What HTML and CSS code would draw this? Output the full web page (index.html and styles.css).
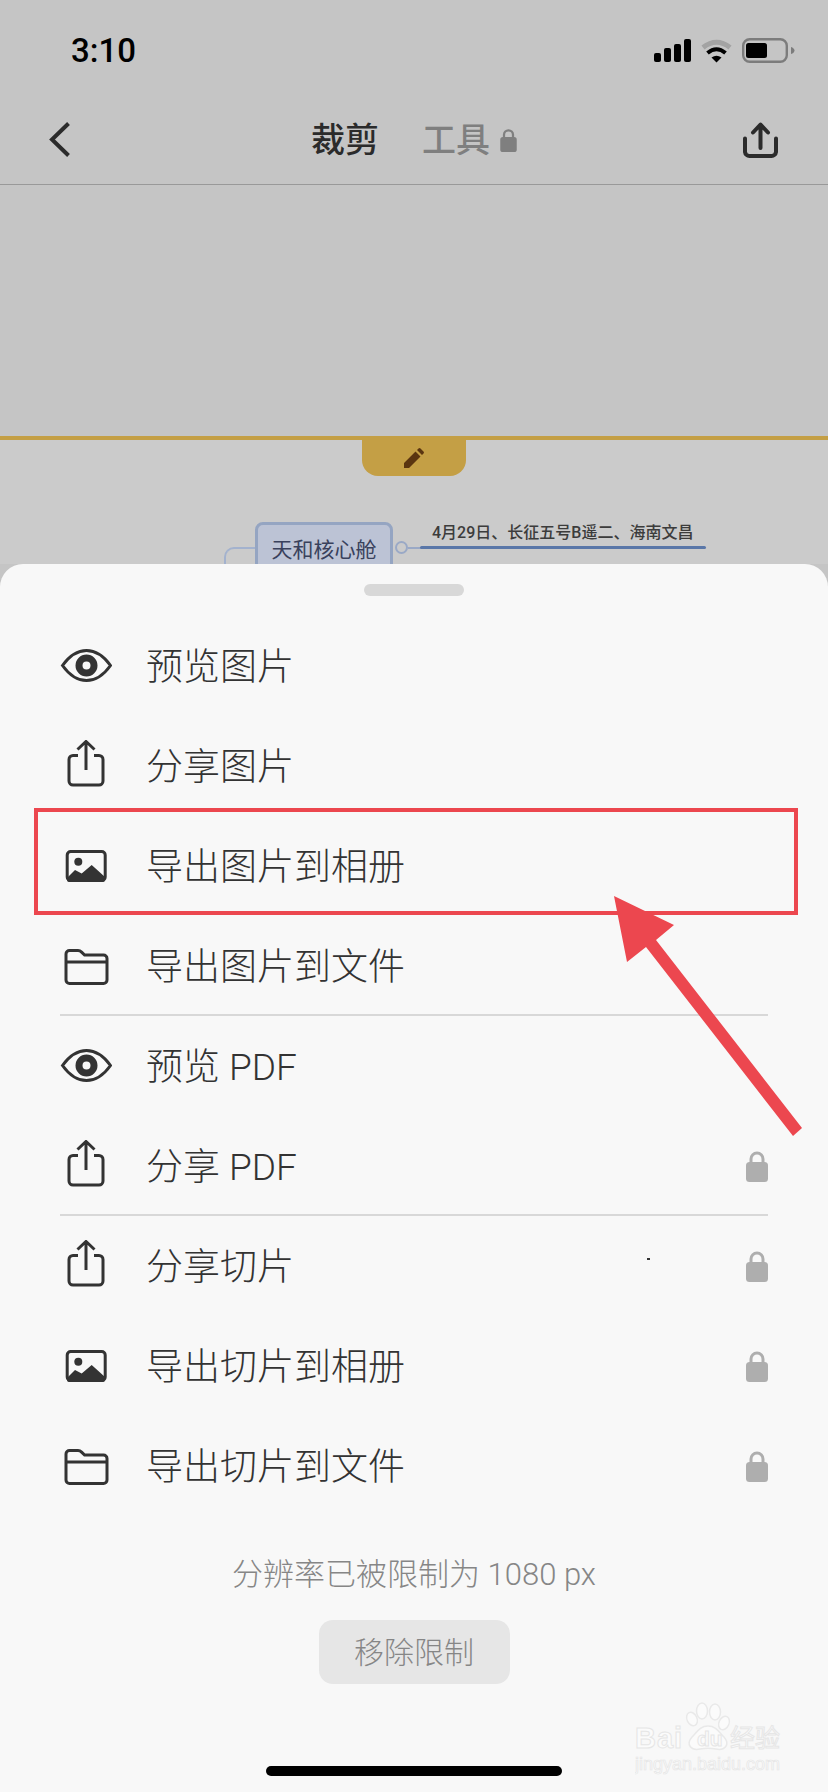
FILE: index.html
```html
<!DOCTYPE html>
<html lang="zh-CN">
<head>
    <meta charset="UTF-8">
    <meta name="viewport" content="width=device-width, initial-scale=1.0">
    <title>裁剪</title>
    <link rel="stylesheet" href="styles.css">
</head>
<body>
    <svg class="icon-defs" width="0" height="0">
        <symbol id="i-eye" viewBox="0 0 52 52">
            <path d="M2.500 25.500C10 15 18 10.500 26.500 10.500S43 15 50.500 25.500C43 36 35 40.500 26.500 40.500S10 36 2.500 25.500Z" fill="none" stroke="currentColor" stroke-width="3"/>
            <circle cx="26.500" cy="25.500" r="7.500" fill="none" stroke="currentColor" stroke-width="7"/>
        </symbol>
        <symbol id="i-share" viewBox="0 0 52 52">
            <path d="M18 15.500H13a4 4 0 0 0-4 4V41a4 4 0 0 0 4 4h26a4 4 0 0 0 4-4V19.500a4 4 0 0 0-4-4h-5" fill="none" stroke="currentColor" stroke-width="3"/>
            <path d="M26 30V2M17.500 9.500L26 1.500l8.500 8" fill="none" stroke="currentColor" stroke-width="3"/>
        </symbol>
        <symbol id="i-image" viewBox="0 0 52 52">
            <rect x="7.200" y="11.500" width="38" height="29" rx="3.500" fill="none" stroke="currentColor" stroke-width="3"/>
            <circle cx="18.300" cy="21.700" r="4" fill="currentColor"/>
            <path d="M7 38L15 30l6.700 3.500 10-8.500L45 37v3a2 2 0 0 1-2 2H9a2 2 0 0 1-2-2Z" fill="currentColor"/>
        </symbol>
        <symbol id="i-folder" viewBox="0 0 52 52">
            <path d="M6 14a3.500 3.500 0 0 1 3.500-3.500h8.500c1.600 0 2.600.6 3.600 1.600l3 3h18.900a3.500 3.500 0 0 1 3.500 3.500V40a3.500 3.500 0 0 1-3.500 3.500H9.500A3.500 3.500 0 0 1 6 40Z" fill="none" stroke="currentColor" stroke-width="3"/>
            <path d="M6 22H46" fill="none" stroke="currentColor" stroke-width="3"/>
        </symbol>
        <symbol id="i-lock" viewBox="0 0 22 32">
            <path d="M5 14V9a6 6 0 0 1 12 0v5" fill="none" stroke="currentColor" stroke-width="3"/>
            <rect x="0" y="12" width="22" height="20" rx="3.500" fill="currentColor"/>
        </symbol>
    </svg>

    <div class="app">
        <!-- Status bar -->
        <div class="status">
            <span class="time">3:10</span>
            <div class="status-icons">
                <svg width="37" height="23" viewBox="0 0 37 23">
                    <rect x="0" y="14" width="7" height="9" rx="2"/>
                    <rect x="10" y="9" width="7" height="14" rx="2"/>
                    <rect x="20" y="5" width="7" height="18" rx="2"/>
                    <rect x="30" y="0" width="7" height="23" rx="2"/>
                </svg>
                <svg width="31" height="25" viewBox="0 0 31 25">
                    <path d="M2 9.500Q15.500-1 29 9.500" fill="none" stroke="#a3a3a3" stroke-width="5"/>
                    <path d="M6.500 15Q15.500 7.500 24.500 15" fill="none" stroke="#000" stroke-width="4"/>
                    <path d="M10.500 19.500L15.500 24.500 20.500 19.500Q15.500 16 10.500 19.500Z"/>
                </svg>
                <svg width="53" height="25" viewBox="0 0 53 25">
                    <rect x="1.200" y="1.200" width="43.600" height="22.600" rx="6.500" fill="none" stroke="#7c7c7c" stroke-width="2.400"/>
                    <rect x="4" y="5" width="21" height="15" rx="2.500"/>
                    <path d="M49 9c2 .5 3.500 2 3.500 3.500S51 15.500 49 16Z" fill="#7c7c7c"/>
                </svg>
            </div>
        </div>

        <!-- Navigation -->
        <div class="nav">
            <svg class="nav-back" width="21" height="35" viewBox="0 0 21 35">
                <path d="M19.500 1.500L3 17.500 19.500 33.500" fill="none" stroke="currentColor" stroke-width="4"/>
            </svg>
            <div class="nav-tabs">
                <span class="tab-active">裁剪</span>
                <span class="tab-locked">工具<svg width="17" height="24"><use href="#i-lock"/></svg></span>
            </div>
            <svg class="nav-share" width="36" height="36" viewBox="0 0 36 36">
                <path d="M2 16.500V30a4.500 4.500 0 0 0 4.500 4H28.500a4.500 4.500 0 0 0 4.500-4V16.500" fill="none" stroke="currentColor" stroke-width="4" stroke-linecap="round"/>
                <path d="M17.500 26V3M10 10.500L17.500 2.500 25 10.500" fill="none" stroke="currentColor" stroke-width="4" stroke-linecap="round" stroke-linejoin="round"/>
            </svg>
        </div>

        <div class="crop-area"></div>

        <!-- Mind map under the crop line -->
        <div class="canvas">
            <div class="crop-handle">
                <svg width="20" height="20" viewBox="0 0 20 20">
                    <path d="M0 20V15L11.500 3.500l5 5L5 20ZM13 2l1.500-1.500a1.500 1.500 0 0 1 2 0l3 3a1.500 1.500 0 0 1 0 2L18 7Z"/>
                </svg>
            </div>
            <div class="map-branch"></div>
            <div class="map-node">天和核心舱</div>
            <div class="map-toggle"></div>
            <div class="map-stub"></div>
            <div class="map-label">4月29日、长征五号B遥二、海南文昌</div>
            <div class="map-line"></div>
        </div>

        <!-- Export sheet -->
        <div class="sheet">
            <div class="grabber"></div>
            <div class="list">
                <div class="group">
                    <div class="row"><svg class="row-icon"><use href="#i-eye"/></svg><span class="row-label">预览图片</span></div>
                    <div class="row"><svg class="row-icon"><use href="#i-share"/></svg><span class="row-label">分享图片</span></div>
                    <div class="row"><svg class="row-icon"><use href="#i-image"/></svg><span class="row-label">导出图片到相册</span></div>
                    <div class="row"><svg class="row-icon"><use href="#i-folder"/></svg><span class="row-label">导出图片到文件</span></div>
                </div>
                <div class="group">
                    <div class="row"><svg class="row-icon"><use href="#i-eye"/></svg><span class="row-label">预览 PDF</span></div>
                    <div class="row"><svg class="row-icon"><use href="#i-share"/></svg><span class="row-label">分享 PDF</span><svg class="row-lock"><use href="#i-lock"/></svg></div>
                </div>
                <div class="group">
                    <div class="row"><svg class="row-icon"><use href="#i-share"/></svg><span class="row-label">分享切片</span><svg class="row-lock"><use href="#i-lock"/></svg></div>
                    <div class="row"><svg class="row-icon"><use href="#i-image"/></svg><span class="row-label">导出切片到相册</span><svg class="row-lock"><use href="#i-lock"/></svg></div>
                    <div class="row"><svg class="row-icon"><use href="#i-folder"/></svg><span class="row-label">导出切片到文件</span><svg class="row-lock"><use href="#i-lock"/></svg></div>
                </div>
            </div>
            <p class="limit-note">分辨率已被限制为 1080 px</p>
            <div class="limit-btn"><span>移除限制</span></div>
            <div class="home-bar"></div>
            <span class="speck"></span>
        </div>

        <!-- Annotations on top of the screenshot -->
        <div class="mark-box"></div>
        <svg class="mark-arrow" width="195" height="250" viewBox="610 890 195 250">
            <path d="M614 896L674 925 656 940 802 1128 793 1136 646 947 627 962Z"/>
        </svg>

        <svg class="watermark" width="150" height="76" viewBox="635 1702 150 76">
            <g class="wm-shape">
                <ellipse cx="692" cy="1719" rx="5" ry="7" transform="rotate(-25 692 1719)"/>
                <ellipse cx="702" cy="1711" rx="5.500" ry="8"/>
                <ellipse cx="715" cy="1712" rx="5.500" ry="8"/>
                <ellipse cx="724" cy="1723" rx="5" ry="7" transform="rotate(25 724 1723)"/>
                <path d="M708 1726C716 1726 719 1732 724 1737C731 1745 724 1751 716 1749C711 1748 705 1748 700 1749C692 1751 685 1745 692 1737C697 1732 700 1726 708 1726Z"/>
            </g>
            <text class="wm-text wm-bai" x="635" y="1748">Bai</text>
            <text class="wm-text wm-du" x="697" y="1746">du</text>
            <text class="wm-text wm-cn" x="730" y="1747">经验</text>
            <text class="wm-text wm-url" x="635" y="1770">jingyan.baidu.com</text>
        </svg>
    </div>
</body>
</html>
```

FILE: styles.css
```css
* {
    margin: 0;
    padding: 0;
    box-sizing: border-box;
}
body {
    background: #c5c5c5;
    font-family: Roboto, "Noto Sans CJK SC", sans-serif;
}
.icon-defs {
    position: absolute;
}
.app {
    position: relative;
    width: 828px;
    height: 1792px;
    overflow: hidden;
    display: flex;
    flex-direction: column;
    background: #c5c5c5;
}

/* status bar */
.status {
    height: 100px;
    flex: none;
    display: flex;
    align-items: center;
    justify-content: space-between;
    padding: 0 33px 0 71px;
}
.time {
    font-size: 33px;
    font-weight: 500;
    color: #000;
}
.status-icons {
    display: flex;
    align-items: center;
    gap: 10px;
}

/* nav */
.nav {
    height: 85px;
    flex: none;
    display: grid;
    grid-template-columns: 1fr auto 1fr;
    align-items: center;
    padding: 0 49px 6px 49px;
    border-bottom: 1px solid #999;
    color: #2b2b2b;
}
.nav-back {
    margin-top: 1px;
}
.nav-share {
    justify-self: end;
    margin-top: 2px;
}
.nav-tabs {
    display: flex;
    align-items: center;
    gap: 43px;
    margin-top: 2px;
    font-size: 34px;
    line-height: 44px;
}
.tab-active {
    font-weight: 500;
}
.tab-locked {
    display: flex;
    align-items: center;
    gap: 10px;
    font-weight: 500;
    color: #7f7f7f;
}

.crop-area {
    height: 251px;
    flex: none;
}

/* canvas */
.canvas {
    position: relative;
    height: 128px;
    flex: none;
    overflow: hidden;
    background: #cbcbcb;
    border-top: 4px solid #c49f45;
}
.crop-handle {
    width: 104px;
    height: 36px;
    margin: 0 auto;
    display: flex;
    align-items: center;
    justify-content: center;
    background: #c49f45;
    border-radius: 0 0 16px 16px;
    fill: #5a3510;
}
.map-branch {
    position: absolute;
    left: 224px;
    top: 107px;
    width: 32px;
    height: 30px;
    border-left: 2px solid #a3b2ce;
    border-top: 2px solid #a3b2ce;
    border-radius: 10px 0 0 0;
}
.map-node {
    position: absolute;
    left: 255px;
    top: 82px;
    width: 138px;
    height: 52px;
    display: flex;
    align-items: center;
    justify-content: center;
    background: #bcc3d5;
    border: 3px solid #95a5c2;
    border-radius: 8px;
    font-size: 21px;
    color: #39415c;
}
.map-toggle {
    position: absolute;
    left: 395px;
    top: 101px;
    width: 13px;
    height: 13px;
    border: 2px solid #9aa9c6;
    border-radius: 50%;
}
.map-stub {
    position: absolute;
    left: 408px;
    top: 107px;
    width: 13px;
    height: 2px;
    background: #9aa9c6;
}
.map-label {
    position: absolute;
    left: 432px;
    top: 81px;
    font-size: 16px;
    line-height: 24px;
    font-weight: 500;
    color: #3c3c3c;
    white-space: nowrap;
}
.map-line {
    position: absolute;
    left: 420px;
    top: 106px;
    width: 286px;
    height: 3px;
    background: #5a77a8;
    border-radius: 2px;
}

/* sheet */
.sheet {
    position: relative;
    flex: 1;
    display: flex;
    flex-direction: column;
    align-items: center;
    background: #f8f8f8;
    border-radius: 23px 23px 0 0;
}
.grabber {
    width: 100px;
    height: 12px;
    margin-top: 20px;
    background: #d8d8d8;
    border-radius: 6px;
}
.list {
    width: 100%;
    margin-top: 20px;
    padding: 0 60px;
}
.group + .group {
    box-shadow: 0 -2px 0 #d8d8d8;
}
.row {
    height: 100px;
    display: flex;
    align-items: center;
    color: #333;
    font-size: 37px;
}
.row-icon {
    width: 52px;
    height: 52px;
    margin-right: 34px;
    flex: none;
    overflow: visible;
}
.row-label {
    flex: 1;
    margin-bottom: 4px;
    font-weight: 300;
}
.row-lock {
    width: 22px;
    height: 32px;
    flex: none;
    color: #aeaeae;
}
.tab-locked svg {
    color: #7f7f7f;
}
.limit-note {
    margin-top: 39px;
    font-size: 31px;
    line-height: 40px;
    font-weight: 300;
    color: #868686;
}
.limit-btn {
    width: 191px;
    height: 64px;
    margin-top: 25px;
    display: flex;
    align-items: center;
    justify-content: center;
    background: #e6e6e6;
    border-radius: 14px;
    font-size: 30px;
    color: #868686;
}
.limit-btn span {
    margin-bottom: 4px;
    font-weight: 300;
}
.home-bar {
    width: 296px;
    height: 10px;
    margin-top: 82px;
    background: #000;
    border-radius: 5px;
}
.speck {
    position: absolute;
    left: 647px;
    top: 694px;
    width: 3px;
    height: 2px;
    background: #333;
}

/* annotations */
.mark-box {
    position: absolute;
    left: 34px;
    top: 808px;
    width: 764px;
    height: 107px;
    border: 4px solid #ec474f;
}
.mark-arrow {
    position: absolute;
    left: 610px;
    top: 890px;
    fill: #ec474f;
}

/* watermark */
.watermark {
    position: absolute;
    left: 635px;
    top: 1702px;
}
.wm-shape {
    fill: #fbfbfb;
    stroke: #e9e9e9;
    stroke-width: 1.500;
}
.wm-text {
    fill: #fbfbfb;
    stroke: #e6e6e6;
    stroke-width: 1;
    font-family: "Liberation Sans", "Noto Sans CJK SC", sans-serif;
}
.wm-bai {
    font-size: 29px;
    font-weight: 700;
    letter-spacing: 1px;
}
.wm-du {
    font-size: 21px;
    font-weight: 700;
}
.wm-cn {
    font-size: 25px;
}
.wm-url {
    font-size: 18px;
    stroke-width: .7;
}
```
